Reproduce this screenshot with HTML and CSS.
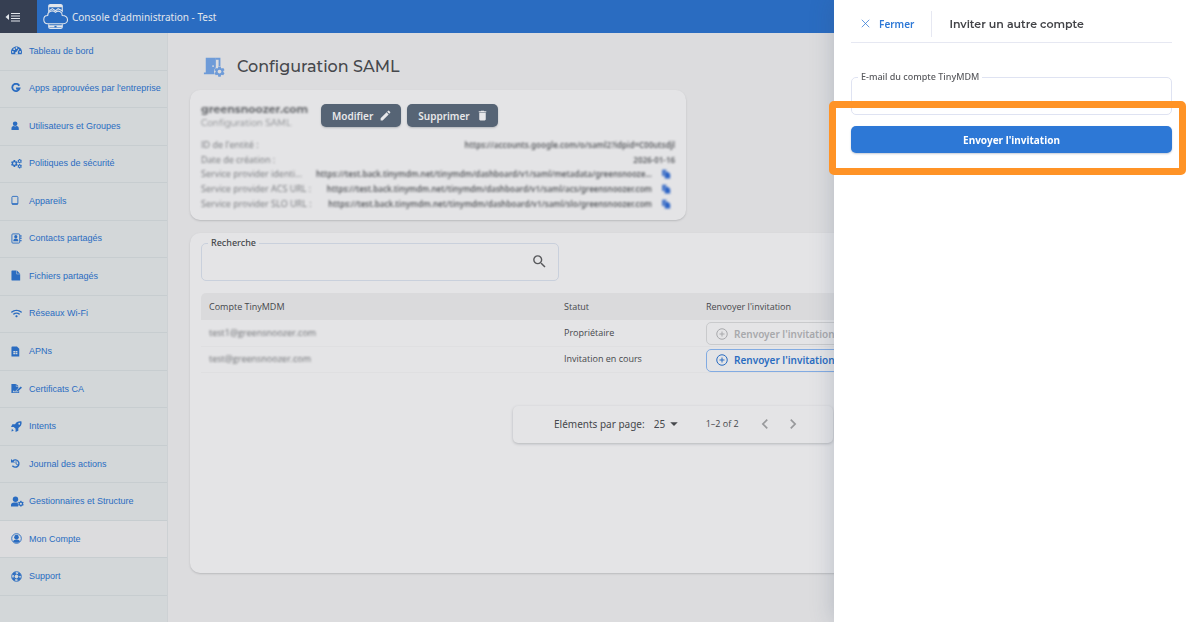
FILE: index.html
```html
<!DOCTYPE html>
<html lang="fr">
<head>
<meta charset="utf-8">
<title>Console d'administration - Test</title>
<link rel="stylesheet" href="styles.css">
</head>
<body>
<svg class="defs" aria-hidden="true">
  <symbol id="gear" viewBox="0 0 24 24"><path d="M19.14 12.94c.04-.3.06-.61.06-.94 0-.32-.02-.64-.07-.94l2.03-1.58c.18-.14.23-.41.12-.61l-1.92-3.32c-.12-.22-.37-.29-.59-.22l-2.39.96c-.5-.38-1.03-.7-1.62-.94l-.36-2.54c-.04-.24-.24-.41-.48-.41h-3.84c-.24 0-.43.17-.47.41l-.36 2.54c-.59.24-1.13.57-1.62.94l-2.39-.96c-.22-.08-.47 0-.59.22L2.74 8.87c-.12.21-.08.47.12.61l2.03 1.58c-.05.3-.09.63-.09.94s.02.64.07.94l-2.03 1.58c-.18.14-.23.41-.12.61l1.92 3.32c.12.22.37.29.59.22l2.39-.96c.5.38 1.03.7 1.62.94l.36 2.54c.05.24.24.41.48.41h3.84c.24 0 .44-.17.47-.41l.36-2.54c.59-.24 1.13-.56 1.62-.94l2.39.96c.22.08.47 0 .59-.22l1.92-3.32c.12-.22.07-.47-.12-.61l-2.01-1.58zM12 15.6c-1.98 0-3.6-1.62-3.6-3.6s1.62-3.6 3.6-3.6 3.6 1.62 3.6 3.6-1.62 3.6-3.6 3.6z"/></symbol>
  <symbol id="copy" viewBox="0 0 24 24"><path d="M3 2h10v4H8v11H3z"/><path d="M9 7h8l5 5v11H9z"/></symbol>
  <symbol id="plus" viewBox="0 0 24 24"><g fill="none" stroke="currentColor" stroke-width="2"><circle cx="12" cy="12" r="10.500"/><path d="M12 7v10M7 12h10"/></g></symbol>
</svg>

<header class="topbar">
  <button class="menu-toggle" type="button" aria-label="Réduire le menu">
    <svg viewBox="0 0 32 20"><path d="M8 4v12L1 10z" fill="currentColor"/><path d="M12 3h18M12 8h18M12 13h18M12 18h18" stroke="currentColor" stroke-width="2"/></svg>
  </button>
  <svg class="logo" viewBox="0 0 48 48">
    <path d="M11 16V4q0-3 3-3h20q3 0 3 3v12M11 39v5q0 3 3 3h20q3 0 3-3v-5" stroke-width="2"/>
    <path d="M11 4h26M11 43h26" stroke-width="4"/>
    <path d="M9 38C-1 37-1 22 9 22c0-9 10-11 15-6 5-5 13-1 13 6 13 0 13 16 2 16z" stroke-width="2"/>
    <path d="M12 13l6-4 6 4 5-4 8 4" stroke-width="2"/>
    <path class="logo-dot" d="M22 42h4v3h-4z"/>
  </svg>
  <span class="brand">Console d'administration - Test</span>
</header>

<div class="layout">
  <nav class="sidebar">
    <a class="nav-item" href="#"><svg viewBox="0 0 24 24"><path fill-rule="evenodd" d="M12 3C5.500 3 0 8 0 15q0 3 1 5h22q1-2 1-5C24 8 18.500 3 12 3zM4 13a2 2 0 1 1 0 4 2 2 0 0 1 0-4zM7 7a2 2 0 1 1 0 4 2 2 0 0 1 0-4zM12 4.500a2 2 0 1 1 0 4 2 2 0 0 1 0-4zM20 13a2 2 0 1 1 0 4 2 2 0 0 1 0-4zM16.500 8l1.500 1-3.500 6.500a3 3 0 1 1-2-1z"/></svg>Tableau de bord</a>
    <a class="nav-item" href="#"><svg viewBox="0 0 24 24"><path d="M18 6A8 8 0 1 0 18.500 12H11" fill="none" stroke="currentColor" stroke-width="4"/></svg>Apps approuvées par l'entreprise</a>
    <a class="nav-item" href="#"><svg viewBox="0 0 24 24"><circle cx="9" cy="8" r="5"/><path d="M1 21v-2q0-6 5-6 3 2 6 0 5 0 5 6v2q0 1-1 1H2q-1 0-1-1z"/></svg>Utilisateurs et Groupes</a>
    <a class="nav-item" href="#"><svg viewBox="0 0 26 24"><use href="#gear" x="-2" y="2" width="20" height="20"/><use href="#gear" x="14" y="0" width="13" height="13"/><use href="#gear" x="14" y="12" width="13" height="13"/></svg>Politiques de sécurité</a>
    <a class="nav-item" href="#"><svg viewBox="0 0 24 24"><rect x="2" y="3" width="13" height="17" rx="2" fill="none" stroke="currentColor" stroke-width="2"/><path d="M2 18h13v3H2z"/></svg>Appareils</a>
    <a class="nav-item" href="#"><svg viewBox="0 0 24 24"><rect x="2" y="2" width="17" height="20" rx="2" fill="none" stroke="currentColor" stroke-width="2"/><circle cx="10.500" cy="8" r="3.500"/><path d="M5 18q0-6 5.500-6t5.500 6zM20 5h3v3h-3zM20 10h3v3h-3zM20 15h3v3h-3z"/></svg>Contacts partagés</a>
    <a class="nav-item" href="#"><svg viewBox="0 0 24 24"><path d="M2 1h10v8h8v14H2q-1 0-1-1V2q0-1 1-1z"/><path d="M13 1l7 7h-7z"/></svg>Fichiers partagés</a>
    <a class="nav-item" href="#"><svg viewBox="0 0 640 512"><path d="M634.910 154.880C457.740-8.990 182.190-8.930 5.090 154.880c-6.660 6.160-6.790 16.590-.35 22.980l34.240 33.970c6.140 6.100 16.020 6.230 22.400.38 145.920-133.680 371.300-133.710 517.250 0 6.380 5.850 16.260 5.710 22.400-.38l34.240-33.970c6.430-6.390 6.300-16.820-.36-22.980zM320 352c-35.350 0-64 28.650-64 64s28.650 64 64 64 64-28.650 64-64-28.650-64-64-64zm202.670-83.590c-115.260-101.930-290.210-101.820-405.340 0-6.900 6.100-7.120 16.690-.57 23.150l34.440 33.990c6 5.920 15.660 6.320 22.050.8 83.950-72.570 209.740-72.410 293.490 0 6.390 5.520 16.050 5.130 22.050-.8l34.440-33.990c6.560-6.460 6.330-17.060-.56-23.150z"/></svg>Réseaux Wi-Fi</a>
    <a class="nav-item" href="#"><svg viewBox="0 0 24 24"><path fill-rule="evenodd" d="M3 1h10l5 5v17H1V3q0-2 2-2zM5 11h4v3H5zM10 11h4v3h-4zM5 15h4v3H5zM10 15h4v3h-4z"/></svg>APNs</a>
    <a class="nav-item" href="#"><svg viewBox="0 0 27 24"><path d="M1 1h11v6h6v4l-7 7v2H9l-2-4-3 5h14v-3l2-2v7H1z"/><path d="M13 1l5 5h-5zM24 7l3 3-10 9-4 1 1-4z"/></svg>Certificats CA</a>
    <a class="nav-item" href="#"><svg viewBox="0 0 24 24"><path fill-rule="evenodd" d="M23 1c1 7-2 11-7 14v6l-6 3v-7l-4-4H0l3-6h6c3-5 7-7 14-6zM18 4a2 2 0 1 0 0 4 2 2 0 0 0 0-4zM2 17l4 4-5 2z"/></svg>Intents</a>
    <a class="nav-item" href="#"><svg viewBox="0 0 24 24"><path d="M4 6a8 8 0 1 1-1 11" fill="none" stroke="currentColor" stroke-width="3"/><path d="M0 2l9 8H0z"/><path d="M11 7v6l4 2" fill="none" stroke="currentColor" stroke-width="2"/></svg>Journal des actions</a>
    <a class="nav-item" href="#"><svg class="wide" viewBox="0 0 29 24"><circle cx="10" cy="7" r="6"/><path d="M0 23v-3q0-6 7-6h8l1 9z"/><use href="#gear" x="14" y="9" width="16" height="16"/></svg>Gestionnaires et Structure</a>
    <a class="nav-item active" href="#" aria-current="page"><svg viewBox="0 0 24 24"><circle cx="12" cy="12" r="10.500" fill="none" stroke="currentColor" stroke-width="2"/><circle cx="12" cy="9" r="5"/><path d="M4 18q2-4 8-4t8 4q-8 7-16 0z"/></svg>Mon Compte</a>
    <a class="nav-item" href="#"><svg viewBox="0 0 24 24"><g fill="none" stroke="currentColor"><circle cx="12" cy="12" r="10.500" stroke-width="2"/><circle cx="12" cy="12" r="5" stroke-width="2"/><circle cx="12" cy="12" r="8" stroke-width="5" stroke-dasharray="7 5.566" stroke-dashoffset="-2.800"/></g></svg>Support</a>
  </nav>

  <main class="content">
    <div class="page-title">
      <svg viewBox="0 0 24 24"><path d="M3 2h11v18H1v-2h2z"/><path d="M14 3h4v8" fill="none" stroke="currentColor" stroke-width="2"/><circle cx="11" cy="11" r="1" class="knob"/><circle cx="18" cy="17" r="6" class="knob"/><use href="#gear" x="11" y="10" width="14" height="14"/></svg>
      <h1>Configuration SAML</h1>
    </div>

    <div class="cards">
      <section class="card saml">
        <div class="saml-head">
          <div class="blurred">
            <h2>greensnoozer.com</h2>
            <p>Configuration SAML</p>
          </div>
          <button class="btn-dark" type="button">Modifier<svg viewBox="0 0 24 24"><path d="M3 17.250V21h3.750L17.810 9.940l-3.750-3.750L3 17.250zM20.710 7.040a1 1 0 0 0 0-1.410l-2.340-2.340a1 1 0 0 0-1.410 0l-1.830 1.830 3.750 3.750 1.830-1.830z"/></svg></button>
          <button class="btn-dark" type="button">Supprimer<svg viewBox="0 0 24 24"><path d="M6 19c0 1.100.9 2 2 2h8c1.100 0 2-.9 2-2V7H6v12zM19 4h-3.500l-1-1h-5l-1 1H5v2h14V4z"/></svg></button>
        </div>
        <dl class="details blurred">
          <div><dt>ID de l'entité :</dt><dd>https://accounts.google.com/o/saml2?idpid=C00utsdjl</dd></div>
          <div><dt>Date de création :</dt><dd>2026-01-16</dd></div>
          <div><dt>Service provider identi...</dt><dd>https://test.back.tinymdm.net/tinymdm/dashboard/v1/saml/metadata/greensnooze...</dd><button type="button" aria-label="Copier"><svg viewBox="0 0 24 24"><use href="#copy"/></svg></button></div>
          <div><dt>Service provider ACS URL :</dt><dd>https://test.back.tinymdm.net/tinymdm/dashboard/v1/saml/acs/greensnoozer.com</dd><button type="button" aria-label="Copier"><svg viewBox="0 0 24 24"><use href="#copy"/></svg></button></div>
          <div><dt>Service provider SLO URL :</dt><dd>https://test.back.tinymdm.net/tinymdm/dashboard/v1/saml/slo/greensnoozer.com</dd><button type="button" aria-label="Copier"><svg viewBox="0 0 24 24"><use href="#copy"/></svg></button></div>
        </dl>
      </section>
    </div>

    <section class="card accounts">
      <fieldset class="field search">
        <legend><label for="search">Recherche</label></legend>
        <input id="search" type="text">
        <svg viewBox="0 0 24 24"><path d="M15.500 14h-.79l-.28-.27A6.470 6.470 0 0 0 16 9.500 6.500 6.500 0 1 0 9.500 16c1.610 0 3.090-.59 4.230-1.570l.27.28v.79l5 4.990L20.490 19l-4.990-5zm-6 0C7.010 14 5 11.990 5 9.500S7.010 5 9.500 5 14 7.010 14 9.500 11.990 14 9.500 14z"/></svg>
      </fieldset>

      <table class="grid">
        <thead><tr><th class="c-account">Compte TinyMDM</th><th class="c-status">Statut</th><th>Renvoyer l'invitation</th></tr></thead>
        <tbody>
          <tr><td><span class="blurred">test1@greensnoozer.com</span></td><td>Propriétaire</td><td><button class="btn-outline" type="button" disabled><svg viewBox="0 0 24 24"><use href="#plus"/></svg>Renvoyer l'invitation</button></td></tr>
          <tr><td><span class="blurred">test@greensnoozer.com</span></td><td>Invitation en cours</td><td><button class="btn-outline" type="button"><svg viewBox="0 0 24 24"><use href="#plus"/></svg>Renvoyer l'invitation</button></td></tr>
        </tbody>
      </table>

      <div class="paginator">
        <label for="per-page">Eléments par page:</label>
        <span class="select-wrap"><select id="per-page"><option>25</option><option>50</option><option>100</option></select><svg viewBox="0 0 24 24"><path d="M3 8l9 9 9-9z"/></svg></span>
        <span class="range">1–2 of 2</span>
        <button type="button" aria-label="Page précédente"><svg viewBox="0 0 24 24"><path d="M15.410 7.410L14 6l-6 6 6 6 1.410-1.410L10.830 12z"/></svg></button>
        <button type="button" aria-label="Page suivante"><svg viewBox="0 0 24 24"><path d="M10 6L8.590 7.410 13.170 12l-4.580 4.590L10 18l6-6z"/></svg></button>
      </div>
    </section>
  </main>
</div>

<aside class="drawer">
  <div class="drawer-head">
    <button class="close" type="button"><svg viewBox="0 0 24 24"><path d="M2 2l20 20M22 2L2 22" stroke="currentColor" stroke-width="2"/></svg>Fermer</button>
    <h2>Inviter un autre compte</h2>
  </div>
  <form class="drawer-form">
    <fieldset class="field">
      <legend><label for="email">E-mail du compte TinyMDM</label></legend>
      <input id="email" type="email">
    </fieldset>
    <div class="highlighted">
      <button class="btn-primary" type="button">Envoyer l'invitation</button>
    </div>
  </form>
</aside>
</body>
</html>
```

FILE: styles.css
```css
* { box-sizing: border-box; }

body {
  margin: 0;
  min-height: 100vh;
  display: flex;
  flex-direction: column;
  overflow: hidden;
  background: #dcdcde;
  color: #46484c;
  font: 9px/14px "Noto Sans", "Open Sans", sans-serif;
}

h1, h2, p, dl, dd { margin: 0; }
button, input, select { font: inherit; color: inherit; border: 0; padding: 0; background: none; }
svg { flex: none; fill: currentColor; }
.defs { position: absolute; width: 0; height: 0; }
.blurred { filter: blur(1px); }

.topbar {
  display: flex;
  align-items: center;
  height: 33px;
  background: #2a6cc1;
  color: #e2e6ec;
}
.menu-toggle {
  align-self: stretch;
  width: 37px;
  padding-left: 5px;
  display: flex;
  align-items: center;
  background: #363f52;
}
.menu-toggle svg { width: 16px; height: 10px; }
.logo { width: 25px; height: 25px; margin: 0 4px 0 6px; fill: none; stroke: currentColor; }
.logo-dot { fill: #2a6cc1; stroke: none; }
.brand { font-size: 10px; }

.layout { flex: 1; display: flex; }

.sidebar {
  width: 168px;
  flex: none;
  display: flex;
  flex-direction: column;
  padding-bottom: 26px;
  background: #d3d7d9;
  border-right: 1px solid #cdd1d4;
}
.nav-item {
  flex: 1;
  display: flex;
  align-items: center;
  gap: 7px;
  padding: 0 11px 1px;
  border-bottom: 1px solid #c7cdd0;
  color: #2a6cc1;
  font: 9px/12px "Liberation Sans", Arial, sans-serif;
  text-decoration: none;
  white-space: nowrap;
}
.nav-item svg { width: 11px; height: 11px; }
.nav-item .wide { width: 13px; margin-right: -2px; }
.nav-item.active { background: #dcdcde; }

.content { flex: 1; min-width: 0; padding: 20px 31px 49px 22px; display: flex; flex-direction: column; }

.page-title { display: flex; align-items: center; gap: 12px; padding-left: 13px; height: 28px; }
.page-title svg { width: 22px; height: 22px; color: #6e9bd8; }
.page-title .knob { fill: #dcdcde; }
.page-title h1 { font: 500 16px/24px Montserrat, Inter, sans-serif; }

.cards { display: grid; grid-template-columns: minmax(0, 19fr) minmax(0, 18fr); margin: 9px 0 13px; }
.card { background: #e4e4e6; border-radius: 10px; box-shadow: 0 1px 2px #b9babd; padding: 0 11px; }

.saml { height: 130px; padding-top: 12px; }
.saml-head { display: flex; align-items: flex-start; gap: 6px; height: 36px; }
.saml-head > div { width: 114px; }
.saml-head h2 { font: 700 11px/15px Montserrat, Inter, sans-serif; color: #66686c; }
.saml-head p { font: 9px/12px Montserrat, Inter, sans-serif; color: #85878b; }
.btn-dark {
  display: flex;
  align-items: center;
  gap: 6px;
  height: 23px;
  margin-top: 2px;
  padding: 0 9px 0 11px;
  border-radius: 5px;
  background: #566475;
  color: #e8e8ea;
  font-size: 10px;
  font-weight: 600;
  box-shadow: 0 1px 2px #b4b7bb;
}
.btn-dark svg { width: 13px; height: 13px; }
.details { display: flex; flex-direction: column; height: 73px; font-family: "Open Sans", sans-serif; }
.details div { flex: 1; display: flex; align-items: center; line-height: 14px; white-space: nowrap; }
.details dt { color: #77797d; }
.details dd { margin-left: auto; color: #5c5e62; font: 600 8px/14px "Noto Sans", sans-serif; }
.details button { display: flex; margin: 0 4px 0 9px; color: #2a62c4; }
.details svg { width: 10px; height: 10px; }

.field {
  display: flex;
  align-items: center;
  min-width: 0;
  margin: 0;
  padding: 0;
  border: 1px solid #dfe3f2;
  border-radius: 5px;
}
.field legend { margin-left: 6px; padding: 0 3px; font-weight: 500; line-height: 14px; }
.field input { flex: 1; min-width: 0; height: 30px; padding: 0 9px; outline: 0; }

.accounts { flex: 1; padding-top: 3px; }
.search { width: 358px; border-color: #c9d0dc; }
.search svg { width: 17px; height: 17px; margin: -7px 10px 0 0; color: #58595c; }

.grid { width: 100%; margin-top: 12px; border-collapse: collapse; table-layout: fixed; text-align: left; font-family: "Open Sans", sans-serif; }
.grid th { height: 27px; padding: 0 8px; background: #dadadc; font-weight: 500; }
.grid td { height: 26px; padding: 0 8px; border-bottom: 1px solid #dfdfe1; }
.grid td .blurred { display: block; color: #6d6f73; }
.grid .c-account { width: 355px; border-radius: 5px 0 0 0; }
.grid .c-status { width: 142px; }
.btn-outline {
  display: flex;
  align-items: center;
  gap: 6px;
  height: 23px;
  margin-top: 2px;
  padding: 0 10px 0 9px;
  border: 1px solid #82abe2;
  border-radius: 5px;
  color: #2a6cc1;
  font-size: 10px;
  font-family: "Noto Sans", sans-serif;
  font-weight: 600;
}
.btn-outline svg { width: 12px; height: 12px; }
.btn-outline:disabled { border-color: #c9cacc; color: #a8a9ac; }

.paginator {
  display: flex;
  align-items: center;
  width: 320px;
  height: 37px;
  margin: 33px auto 0;
  padding-left: 41px;
  border-radius: 5px;
  font-size: 10px;
  box-shadow: 0 1px 3px #b4b6ba;
}
.select-wrap { display: flex; align-items: center; margin: 0 27px 0 9px; }
.select-wrap select { appearance: none; width: 15px; }
.select-wrap svg { width: 10px; height: 10px; }
.range { font: 9px/14px "Open Sans", sans-serif; margin-right: 16px; }
.paginator button { display: flex; margin-right: 8px; color: #98999c; }
.paginator button svg { width: 20px; height: 20px; }

.drawer {
  position: fixed;
  top: 0;
  right: 0;
  bottom: 0;
  width: 353px;
  padding: 5px 15px 0 17px;
  background: #fff;
  box-shadow: 0 0 22px rgba(60, 80, 110, 0.25);
}
.drawer-head { display: flex; align-items: center; height: 38px; border-bottom: 1px solid #e6e8f2; }
.close {
  display: flex;
  align-items: center;
  gap: 9px;
  height: 26px;
  padding: 0 17px 0 10px;
  border-right: 1px solid #e6e8f2;
  color: #2d78d6;
  font-size: 10px;
  font-weight: 600;
}
.close svg { width: 9px; height: 9px; }
.drawer-head h2 { margin-left: 17px; font: 600 11px/16px Montserrat, Inter, sans-serif; color: #424347; }
.drawer-form { padding-top: 27px; color: #5a5b5f; }
.highlighted { position: relative; margin-top: 11px; }
.highlighted::after {
  content: "";
  position: absolute;
  inset: -25px -14px -22px -22px;
  border: 7px solid #ff9326;
  border-radius: 5px;
  pointer-events: none;
}
.btn-primary {
  display: block;
  width: 100%;
  height: 27px;
  border-radius: 5px;
  background: #2d78d6;
  color: #fff;
  font-size: 10px;
  font-weight: 700;
  box-shadow: 0 1px 2px #c4cbd6;
}
```
